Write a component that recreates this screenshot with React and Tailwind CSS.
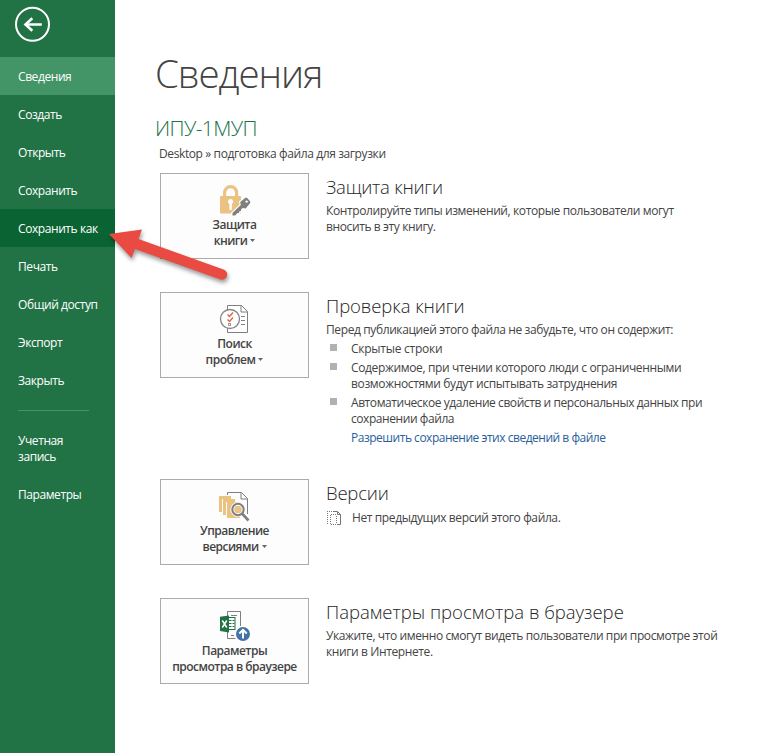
const NAV = ["Сведения", "Создать", "Открыть", "Сохранить", "Сохранить как", "Печать", "Общий доступ", "Экспорт", "Закрыть"];

function navTone(label) {
  if (label === "Сведения") return "bg-[#439467]";
  if (label === "Сохранить как") return "bg-[#0a6332]";
  return "";
}

function Lines({ items }) {
  return items.map((t) => (
    <span key={t} className="block whitespace-nowrap">{t}</span>
  ));
}

function Sidebar() {
  return (
    <aside className="h-full w-[115px] shrink-0 bg-[#217346] tracking-[-0.42px] text-white">
      <div className="h-[57px] pt-[6px] pl-[14px]">
        <svg width="37" height="37" viewBox="0 0 37 37" fill="none" stroke="#fff">
          <circle cx="18.5" cy="18.3" r="16.5" strokeWidth="2" />
          <path d="M11.5 18.5h16.300" strokeWidth="2.500" />
          <path d="M18.300 12.300l-6.800 6.200 6.800 6.200" strokeWidth="2.600" />
        </svg>
      </div>
      <nav>
        {NAV.map((n) => (
          <a key={n} className={"flex h-[38px] items-center whitespace-nowrap pl-[18px] pt-[2px] " + navTone(n)}>{n}</a>
        ))}
      </nav>
      <div className="mt-[11px] ml-[18px] h-px w-[71px] bg-[#439467]" />
      <a className="mt-[22px] block pl-[18px]"><Lines items={["Учетная", "запись"]} /></a>
      <a className="mt-[22px] block pl-[18px]">Параметры</a>
    </aside>
  );
}

function LockIcon() {
  const key = "M13.5 31.500v-2.500l8.300-8-.600-3 5.300-4.200h1.500l3.200 3.700v1.500l-4.500 5.500-3.200-.400-1.500 1.400v1.500h-1.500l-.500 2h-1.500l-2.500 2.500z";
  return (
    <svg className="shrink-0" width="32" height="33" viewBox="0 0 32 33">
      <path d="M5.600 13V8.600a6 6 0 0 1 12 0V13" fill="none" stroke="#eac282" strokeWidth="3.200" />
      <rect x="1" y="12" width="21" height="17.500" rx="1" fill="#eac282" />
      <path d="M11.600 15a2.600 2.600 0 0 1 1.200 4.900V26h-2.400v-6.100a2.600 2.600 0 0 1 1.200-4.900z" fill="#fff" />
      <path d={key} fill="#fdfdfd" stroke="#fdfdfd" strokeWidth="2.400" />
      <path d={key} fill="#7f7f7f" />
      <circle cx="27.600" cy="17.600" r="1.200" fill="#fdfdfd" />
    </svg>
  );
}

function CheckIcon() {
  return (
    <svg className="shrink-0" width="32" height="32" viewBox="0 -1 32 32" fill="none">
      <path d="M8.500 1.500h14l6 6v21h-20z" fill="#fff" stroke="#7f7f7f" />
      <path d="M22 1.500v6.500h6.500M22 12.500h4M22 16.500h4M22 20.500h4" stroke="#7f7f7f" />
      <circle cx="11" cy="15" r="9.500" fill="#fff" stroke="#858585" strokeWidth="1.300" />
      <path d="M8.500 10.500l2 2 3.500-4M8.500 15.500l2 2 3.500-4" stroke="#e0603c" strokeWidth="1.300" />
      <rect x="9.500" y="19.500" width="2" height="2" stroke="#999" />
    </svg>
  );
}

function VersionsIcon() {
  return (
    <svg className="shrink-0" width="32" height="34" viewBox="0 -1 32 34" fill="none">
      <path d="M0 5h12v3H3v13H0z" fill="#eac282" />
      <path d="M4 8h12v3H7v13H4z" fill="#eac282" />
      <path d="M8 11h13v16H8z" fill="#eac282" />
      <path d="M8.500 4V1.500h14l6 6V23M22 1.500v6.500h6.500" stroke="#7f7f7f" />
      <circle cx="19" cy="18.500" r="7.600" fill="#fdfdfd" />
      <circle cx="19" cy="18.500" r="3.800" fill="#eac282" />
      <circle cx="19" cy="18.500" r="5.700" stroke="#7f7f7f" strokeWidth="2" />
      <path d="M23 22.500l6.500 7" stroke="#7f7f7f" strokeWidth="2.600" />
    </svg>
  );
}

function BrowserIcon() {
  return (
    <svg className="shrink-0" width="32" height="33" viewBox="0 -1 32 33" fill="none">
      <path d="M8.500 6V1.500h13V16M8.500 22v6.500h8M12 5.500h6M12 25.500h3" stroke="#7f7f7f" />
      <rect x="9.500" y="7.500" width="6.500" height="12" fill="#fff" stroke="#217346" />
      <path d="M10 10.500h2.500m1 0h2m-5.500 3h2.500m1 0h2m-5.500 3h2.500m1 0h2" stroke="#217346" />
      <path d="M1 6.800L10 5.500v17L1 21z" fill="#217346" />
      <path d="M3.300 10.500l4.500 7M7.800 10.500l-4.500 7" stroke="#fff" strokeWidth="1.500" />
      <circle cx="24" cy="24" r="7.800" fill="#fff" />
      <circle cx="24" cy="24" r="7" fill="#4472a8" />
      <path d="M24 28.500v-8M20.300 23.500l3.700-3.700 3.700 3.700" stroke="#fff" strokeWidth="2" />
    </svg>
  );
}

function Caret() {
  return (
    <svg className="-mt-[2px]" width="5" height="3" viewBox="0 0 5 3">
      <path d="M0 0h5L2.500 3z" fill="#666" />
    </svg>
  );
}

function Tile({ icon, lines, arrow, labelClass = "" }) {
  return (
    <button className="flex h-[86px] w-[149px] shrink-0 flex-col items-center border border-[#ababab] bg-[#fdfdfd] pt-[10px] font-semibold tracking-[-0.52px] text-[#444]">
      <span className="flex h-[33px] w-[31px]">{icon}</span>
      <span className={"block " + labelClass}>{lines[0]}</span>
      <span className="flex items-center gap-[3px] whitespace-nowrap">
        {lines[1]}
        {arrow && <Caret />}
      </span>
    </button>
  );
}

function Section({ className, tile, title, titleClass, children }) {
  return (
    <section className={"flex gap-[17px] " + className}>
      {tile}
      <div className="pt-[2px]">
        <h3 className={"text-[18.5px] leading-[24px] font-light whitespace-nowrap text-[#262626] " + titleClass}>{title}</h3>
        {children}
      </div>
    </section>
  );
}

function Bullet({ lines, className }) {
  return (
    <li className={"mb-[3px] flex " + className}>
      <span className="mt-[3px] mr-[14px] ml-[4px] size-[7px] shrink-0 bg-[#b1b1b1]" />
      <span><Lines items={lines} /></span>
    </li>
  );
}

function EmptyVersionIcon() {
  return (
    <svg width="16" height="15" viewBox="0 0 16 15" fill="none" stroke="#777">
      <path d="M1.500 2v11M1 .500h9M5 3.500h5M4.500 4v10M5 13.500h6M10.500 5v8" strokeDasharray="1 1" />
      <path d="M8 .500h3.500l3 3v10H11M11.500.500v3h3" />
    </svg>
  );
}

function PointerArrow() {
  return (
    <svg className="pointer-events-none absolute top-[220px] left-[100px] drop-shadow-[1px_3px_2px_rgba(0,0,0,0.4)]" width="136" height="72" viewBox="0 0 136 72">
      <path d="M9 14L42 9.500 38.500 19 123.500 49.500A5 5 0 0 1 120.500 59.500L35 29 31.500 38z" fill="#e94b43" />
    </svg>
  );
}

export default function App() {
  return (
    <div className="relative flex h-[753px] w-[763px] overflow-hidden bg-white font-['Open_Sans','Noto_Sans',sans-serif] text-[12px] leading-[16px]">
      <Sidebar />
      <main className="pl-[45px] tracking-[-0.39px] text-[#444]">
        <h1 className="mt-[45px] -ml-[5px] h-[56px] text-[38.5px] leading-[56px] font-light tracking-[-1.1px]">Сведения</h1>
        <h2 className="mt-[12px] -ml-[5px] h-[30px] text-[21px] leading-[30px] font-light tracking-[-0.6px] text-[#217346]">ИПУ-1МУП</h2>
        <p className="mt-[3px] -ml-px">Desktop » подготовка файла для загрузки</p>

        <Section className="mt-[11px] h-[119px]" title="Защита книги" titleClass="tracking-[-0.25px]" tile={<Tile icon={<LockIcon />} lines={["Защита", "книги"]} arrow />}>
          <p className="mt-[4px]"><Lines items={["Контролируйте типы изменений, которые пользователи могут", "вносить в эту книгу."]} /></p>
        </Section>

        <Section className="h-[187px]" title="Проверка книги" titleClass="tracking-[-0.07px]" tile={<Tile icon={<CheckIcon />} lines={["Поиск", "проблем"]} arrow />}>
          <p className="mt-[4px]">Перед публикацией этого файла не забудьте, что он содержит:</p>
          <ul className="mt-[3px]">
            <Bullet className="tracking-[-0.25px]" lines={["Скрытые строки"]} />
            <Bullet className="tracking-[-0.35px]" lines={["Содержимое, при чтении которого люди с ограниченными", "возможностями будут испытывать затруднения"]} />
            <Bullet className="tracking-[-0.43px]" lines={["Автоматическое удаление свойств и персональных данных при", "сохранении файла"]} />
          </ul>
          <a className="block pl-[25px] tracking-[-0.48px] text-[#2a6099]">Разрешить сохранение этих сведений в файле</a>
        </Section>

        <Section className="h-[119px]" title="Версии" titleClass="tracking-[-0.2px]" tile={<Tile icon={<VersionsIcon />} lines={["Управление", "версиями"]} arrow />}>
          <p className="mt-[5px] flex items-center gap-[10px]"><EmptyVersionIcon />Нет предыдущих версий этого файла.</p>
        </Section>

        <Section className="" title="Параметры просмотра в браузере" titleClass="tracking-normal" tile={<Tile icon={<BrowserIcon />} lines={["Параметры", "просмотра в браузере"]} labelClass="mt-px" />}>
          <p className="mt-[4px]"><Lines items={["Укажите, что именно смогут видеть пользователи при просмотре этой", "книги в Интернете."]} /></p>
        </Section>
      </main>
      <PointerArrow />
    </div>
  );
}
